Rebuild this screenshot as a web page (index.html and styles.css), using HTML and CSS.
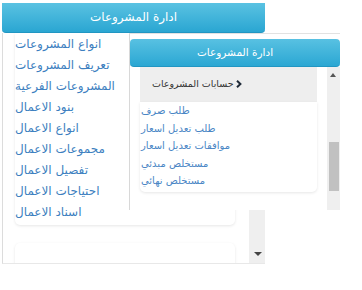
FILE: index.html
```html
<!DOCTYPE html>
<html lang="ar">
<head>
  <meta charset="UTF-8" />
  <title>ادارة المشروعات</title>
  <link rel="stylesheet" href="styles.css">
</head>
<body>
  <div class="panel-back">
    <div class="head-back">ادارة المشروعات</div>
    <div class="body-back">
      <div class="col-back">
        <div class="card-back">
          <a href="#">انواع المشروعات</a>
          <a href="#">تعريف المشروعات</a>
          <a href="#">المشروعات الفرعية</a>
          <a href="#">بنود الاعمال</a>
          <a href="#">انواع الاعمال</a>
          <a href="#">مجموعات الاعمال</a>
          <a href="#">تفصيل الاعمال</a>
          <a href="#">احتياجات الاعمال</a>
          <a href="#">اسناد الاعمال</a>
        </div>
        <div class="card-back card-empty"></div>
      </div>
      <div class="scroll-back"><span class="arrow-down"></span></div>
    </div>
  </div>

  <div class="panel-front">
    <div class="head-front">ادارة المشروعات</div>
    <div class="body-front">
      <div class="col-front">
        <div class="group-title">
          <span>حسابات المشروعات</span>
          <svg class="chev" width="6" height="8" viewBox="0 0 6 8"><path d="M1 0.8 L4.4 4 L1 7.2" fill="none" stroke="#1f2a38" stroke-width="2"/></svg>
        </div>
        <div class="card-front">
          <a href="#">طلب صرف</a>
          <a href="#">طلب تعديل اسعار</a>
          <a href="#">موافقات تعديل اسعار</a>
          <a href="#">مستخلص مبدئي</a>
          <a href="#">مستخلص نهائي</a>
        </div>
      </div>
      <div class="scroll-front">
        <span class="arrow-up"></span>
        <span class="thumb"></span>
      </div>
    </div>
  </div>
</body>
</html>
```

FILE: styles.css
```css
body {
  margin: 0;
  background: #fff;
  font-family: 'DejaVu Sans', sans-serif;
  position: relative;
}

a {
  text-decoration: none;
}

/* back panel */
.panel-back {
  width: 263px;
  margin: 3px 0 0 2px;
}

.head-back {
  height: 30px;
  line-height: 29px;
  text-align: center;
  color: #fff;
  font-size: 12px;
  background: linear-gradient(#5ac2e2, #2aa6d2);
  border-bottom: 1px solid #2196c2;
  border-radius: 0 0 4px 4px;
  box-sizing: border-box;
}

.body-back {
  display: flex;
  height: 230px;
  border-left: 1px solid #dcdcdc;
  border-bottom: 1px solid #e8e8e8;
  overflow: hidden;
}

.col-back {
  flex: 1;
  padding-left: 12px;
  padding-right: 14px;
}

.card-back {
  background: #fff;
  border-radius: 0 0 5px 5px;
  box-shadow: 0 1px 3px rgba(0, 0, 0, 0.1);
  padding: 1px 0 2px;
}

.card-back a {
  display: block;
  direction: ltr;
  text-align: left;
  height: 21px;
  line-height: 21px;
  font-size: 12px;
  color: #3d7fc0;
}

.card-empty {
  margin-top: 18px;
  height: 40px;
  border-radius: 5px;
}

.scroll-back {
  width: 16px;
  background: #efefef;
  position: relative;
}

.arrow-down {
  position: absolute;
  left: 5px;
  bottom: 7px;
  border-left: 4px solid transparent;
  border-right: 4px solid transparent;
  border-top: 4px solid #444;
}

/* front panel */
.panel-front {
  position: absolute;
  left: 129px;
  top: 33px;
  width: 210px;
  height: 176px;
  background: #fff;
  border-top: 1px solid #e2e2e2;
  border-left: 1px solid #d8d8d8;
}

.head-front {
  margin-top: 5px;
  height: 28px;
  line-height: 27px;
  text-align: center;
  color: #fff;
  font-size: 10.5px;
  background: linear-gradient(#58c1e2, #2ba7d3);
  border-bottom: 1px solid #2196c2;
  border-radius: 4px;
  box-sizing: border-box;
}

.body-front {
  display: flex;
  height: 143px;
}

.col-front {
  flex: 1;
  padding-left: 10px;
  padding-right: 10px;
}

.group-title {
  height: 35px;
  background: #eee;
  display: flex;
  align-items: center;
  padding-left: 12px;
  padding-bottom: 2px;
  box-sizing: border-box;
  font-size: 9.5px;
  color: #333;
}

.chev {
  margin-left: 2px;
}

.card-front {
  background: #fff;
  border-radius: 0 0 5px 5px;
  box-shadow: 0 1px 3px rgba(0, 0, 0, 0.1);
  padding: 0 0 2px 1px;
}

.card-front a {
  display: block;
  direction: ltr;
  text-align: left;
  height: 17.5px;
  line-height: 17.5px;
  font-size: 10px;
  color: #4a86c5;
}

.scroll-front {
  width: 13px;
  background: #efefef;
  position: relative;
}

.arrow-up {
  position: absolute;
  left: 3px;
  top: 6px;
  border-left: 3.5px solid transparent;
  border-right: 3.5px solid transparent;
  border-bottom: 4px solid #555;
}

.thumb {
  position: absolute;
  left: 2px;
  top: 75px;
  width: 10px;
  height: 49px;
  background: #c1c1c1;
}
```
